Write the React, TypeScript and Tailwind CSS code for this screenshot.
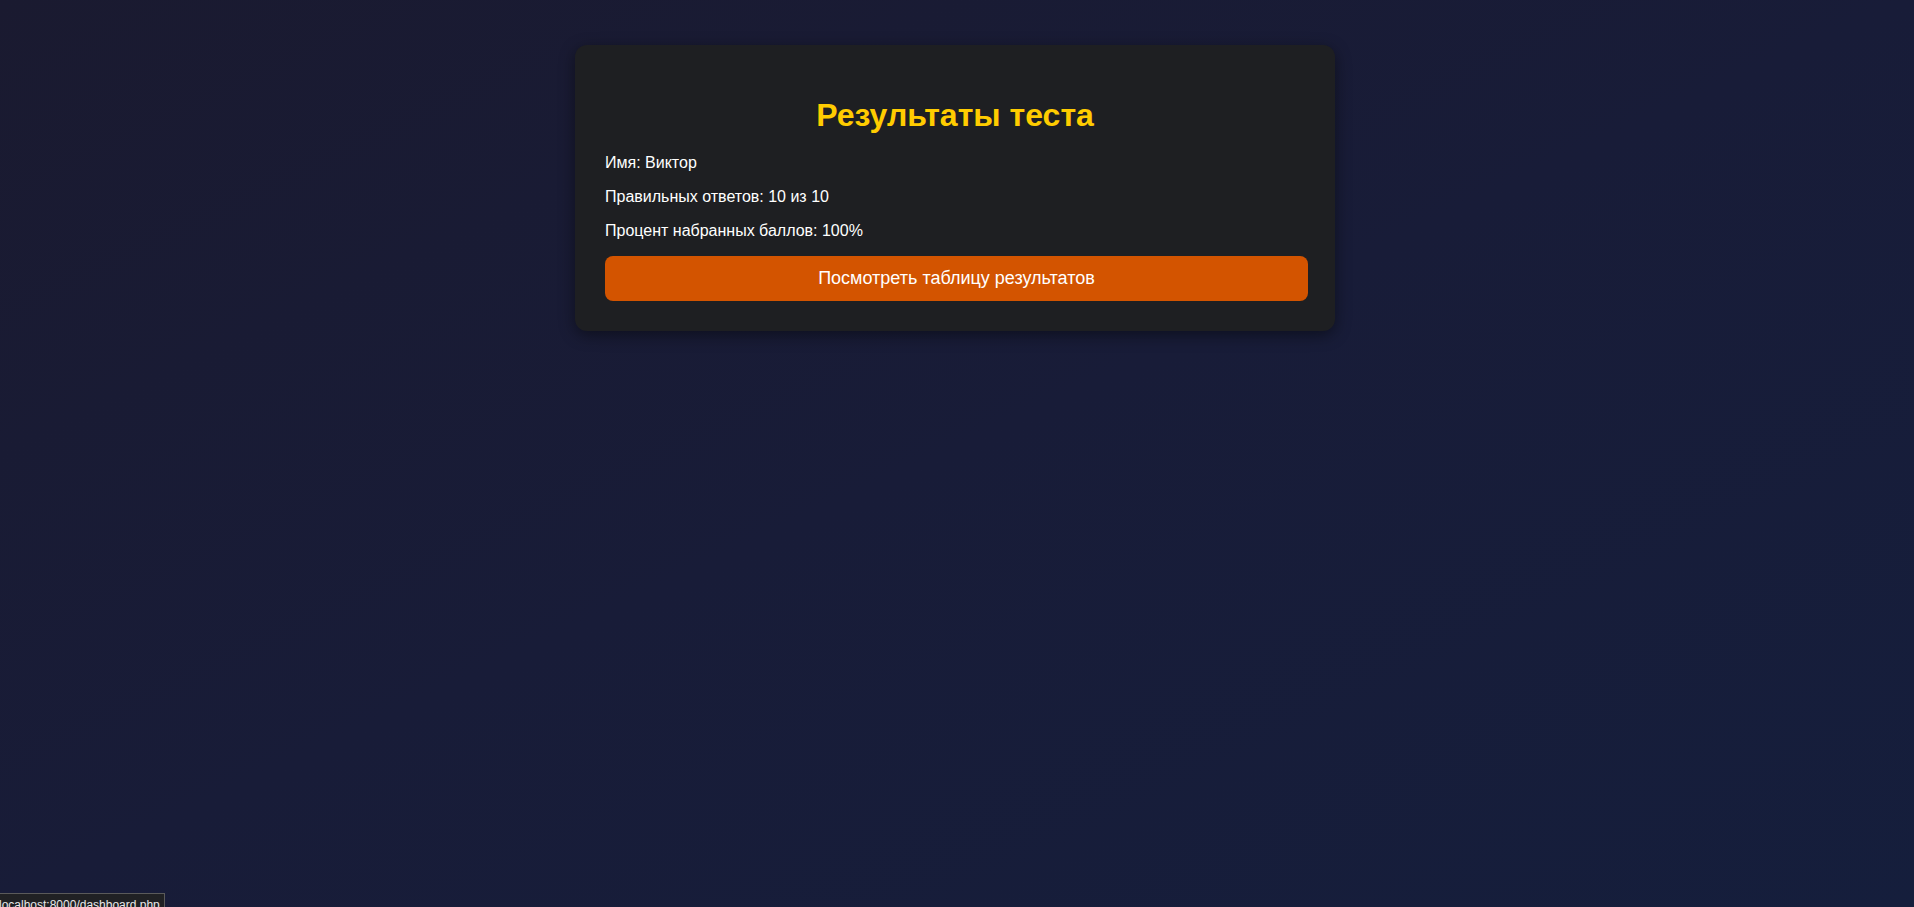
import React from "react";

export default function App() {
  return (
    <div
      className="relative min-h-[907px] w-full overflow-hidden bg-gradient-to-br from-[#1a1a30] via-[#181c38] to-[#151e3c] pt-[45px] pr-[4px]"
      style={{ fontFamily: '"Liberation Sans", Arial, sans-serif' }}
    >
      <div className="mx-auto w-[760px] rounded-[12px] bg-[#1e1f22] p-[30px] shadow-[0_4px_16px_rgba(0,0,0,0.45)]">
        <h2 className="mt-[22px] mb-[21px] text-center text-[32px] font-bold leading-[36px] text-[#ffcc00]">
          Результаты теста
        </h2>
        <p className="my-4 text-[16px] leading-[18px] text-white">Имя: Виктор</p>
        <p className="my-4 text-[16px] leading-[18px] text-white">Правильных ответов: 10 из 10</p>
        <p className="mt-4 mb-4 text-[16px] leading-[18px] text-white">Процент набранных баллов: 100%</p>
        <button className="block h-[45px] w-[703px] rounded-[8px] bg-[#d35400] text-center text-[18px] text-white">
          Посмотреть таблицу результатов
        </button>
      </div>
      <div className="absolute top-[893px] left-[-3px] h-[24px] border border-[#5a5a5a] bg-[#202124] pt-[3px] pr-[4px] pl-[1px] text-[12px] leading-[16px] text-[#e8e8e8]">
        localhost:8000/dashboard.php
      </div>
    </div>
  );
}
